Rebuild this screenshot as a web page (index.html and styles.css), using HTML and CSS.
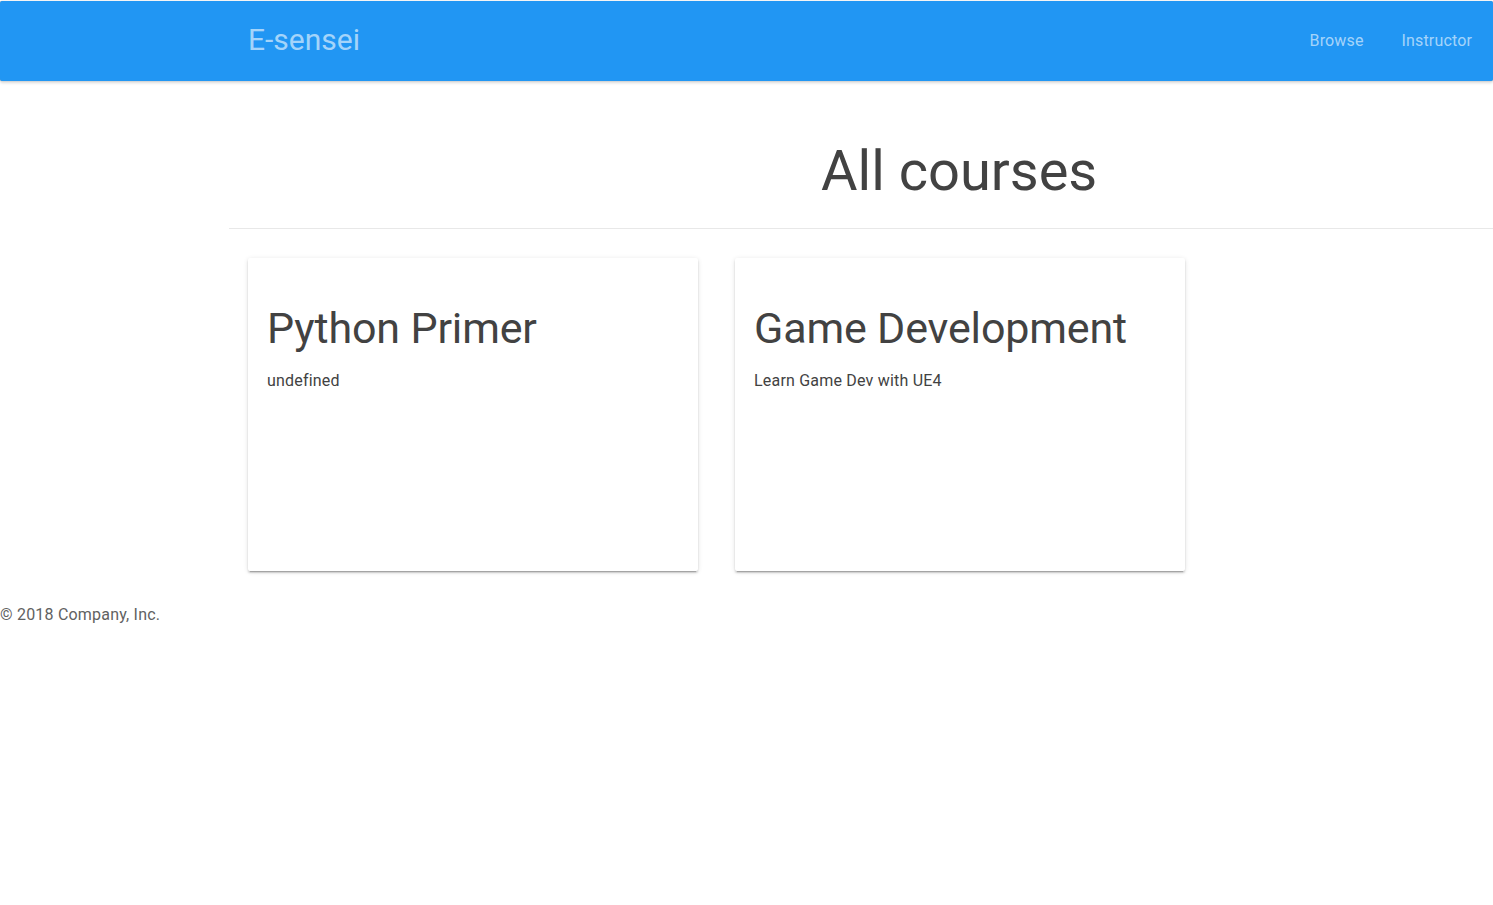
FILE: index.html
```html
<!DOCTYPE html>
<html>
<head>
<meta charset="utf-8">
<title>E-sensei</title>
<link rel="stylesheet" href="styles.css">
</head>
<body>
<header class="header">
  <span class="brand">E-sensei</span>
  <nav class="nav">
    <a class="nav-link" href="#">Browse</a>
    <a class="nav-link" href="#">Instructor</a>
  </nav>
</header>
<main class="main">
  <h1 class="page-title">All courses</h1>
  <hr class="divider">
  <div class="cards">
    <div class="card">
      <h2 class="card-title">Python Primer</h2>
      <p class="card-text">undefined</p>
    </div>
    <div class="card">
      <h2 class="card-title">Game Development</h2>
      <p class="card-text">Learn Game Dev with UE4</p>
    </div>
  </div>
</main>
<footer class="footer">© 2018 Company, Inc.</footer>
</body>
</html>
```
FILE: styles.css
```css
html, body {
  margin: 0;
  padding: 0;
  background: #fff;
  font-family: Roboto, "Helvetica Neue", Arial, sans-serif;
  color: #424242;
}
.header {
  margin-top: 1px;
  height: 80px;
  background: #2196f3;
  border-radius: 2px;
  box-shadow: 0 0 1px 0 rgba(0,0,0,0.4), 0 2px 3px 0 rgba(0,0,0,0.15);
  display: flex;
  align-items: center;
  padding-left: 248px;
  padding-right: 21px;
}
.brand {
  font-size: 30px;
  line-height: 36px;
  margin-top: -2px;
  color: rgba(255,255,255,0.6);
  flex: 1;
}
.nav {
  display: flex;
  gap: 38px;
  margin-top: -2px;
}
.nav-link {
  color: rgba(255,255,255,0.6);
  text-decoration: none;
  font-size: 16px;
  letter-spacing: 0.15px;
}
.main {
  padding-left: 229px;
}
.page-title {
  margin: 0;
  padding-top: 55px;
  padding-left: 592px;
  font-size: 56px;
  font-weight: 400;
  line-height: 70px;
  height: 92px;
  color: #424242;
}
.divider {
  margin: 0;
  border: 0;
  border-top: 1px solid #e8e8e8;
}
.cards {
  display: flex;
  gap: 37px;
  padding-left: 19px;
  padding-top: 29px;
}
.card {
  width: 450px;
  height: 313px;
  box-sizing: border-box;
  padding: 38px 19px;
  background: #fff;
  border-radius: 2px;
  box-shadow: 0 2px 2px 0 rgba(0,0,0,0.14), 0 3px 1px -2px rgba(0,0,0,0.2), 0 1px 5px 0 rgba(0,0,0,0.12);
}
.card-title {
  margin: 0;
  font-size: 43px;
  letter-spacing: -0.15px;
  font-weight: 400;
  line-height: 64px;
  color: #424242;
}
.card-text {
  margin: 11px 0 0;
  font-size: 16px;
  letter-spacing: 0.2px;
  line-height: 20px;
  color: #424242;
}
.footer {
  padding-top: 34px;
  font-size: 16px;
  letter-spacing: 0.2px;
  line-height: 20px;
  color: #616161;
}
```
